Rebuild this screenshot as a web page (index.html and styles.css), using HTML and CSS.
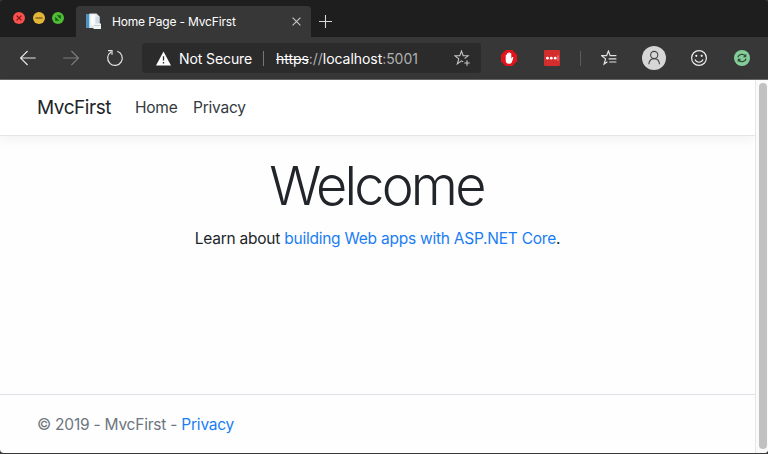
FILE: index.html
```html
<!DOCTYPE html>
<html lang="en">
<head>
<meta charset="utf-8">
<title>Home Page - MvcFirst</title>
<link rel="stylesheet" href="styles.css">
</head>
<body>
<div class="window">
  <div class="tabstrip">
    <div class="lights">
      <svg width="12" height="12" viewBox="0 0 12 12"><circle cx="6" cy="6" r="6" fill="#f9514d"/><path d="M3.6 3.6l4.8 4.8M8.4 3.6L3.6 8.4" stroke="#85151a" stroke-width="1.3"/></svg>
      <svg width="12" height="12" viewBox="0 0 12 12"><circle cx="6" cy="6" r="6" fill="#e2b738"/><path d="M2.5 6h7" stroke="#8c6417" stroke-width="1.3"/></svg>
      <svg width="12" height="12" viewBox="0 0 12 12"><circle cx="6" cy="6" r="6" fill="#50bc36"/><path d="M4.7 3.2h4.1v4.1zM3.2 4.7v4.1h4.1z" fill="#105d12"/></svg>
    </div>
    <div class="tab">
      <svg class="favicon" width="17" height="17" viewBox="0 0 17 17"><path d="M1 1h9v14H1z" fill="#eef3f5"/><path d="M1 1h3.5v14H1z" fill="#4d91c0"/><path d="M4.5 .5h7l3 3V15h-10z" fill="#dce6ec"/><path d="M5.5 1.5h5v11h-5z" fill="#f8fafb"/><path d="M10.5 4h4v7h-4z" fill="#d2dce4"/><path d="M8.5 10.5h7.5v5.5H8.5z" fill="#f1f3f5"/><path d="M9 12.5h6.5" stroke="#c3cdd5"/></svg>
      <span class="tab-title">Home Page - MvcFirst</span>
      <svg class="tab-close" width="9" height="9" viewBox="0 0 9 9"><path d="M.6 .6l7.8 7.8M8.4 .6L.6 8.4" stroke="#c9c9c9" stroke-width="1.1"/></svg>
    </div>
    <svg class="new-tab" width="13" height="13" viewBox="0 0 13 13"><path d="M6.5 0v13M0 6.5h13" stroke="#d8d8d8" stroke-width="1.1"/></svg>
  </div>
  <div class="toolbar">
    <div class="nav-buttons">
      <svg width="16" height="16" viewBox="0 0 16 16" fill="none" stroke="#e6e6e6" stroke-width="1.1"><path d="M15.7 8H.8M7.6 1L.6 8l7 7"/></svg>
      <svg width="16" height="16" viewBox="0 0 16 16" fill="none" stroke="#7d7d7d" stroke-width="1.1"><path d="M.3 8h14.9M8.4 1l7 7-7 7"/></svg>
      <svg width="18" height="18" viewBox="0 0 18 18" fill="none" stroke="#e4e4e4" stroke-width="1.2"><path d="M11.3 2.2A7.3 7.3 0 1 1 5 3M2 1.6h4v4.1"/></svg>
    </div>
    <div class="address">
      <svg class="warning" width="15" height="15" viewBox="0 0 15 15"><path d="M7.5 .5L15 14.5H0z" fill="#fff"/><path d="M7.5 5.3v4.2M7.5 10.9v1.5" stroke="#2b2b2b" stroke-width="1.3"/></svg>
      <span class="not-secure">Not Secure</span>
      <span class="address-rule"></span>
      <span class="url"><s>https</s><i>://</i>localhost<i>:5001</i></span>
      <svg class="star" width="17" height="17" viewBox="0 0 17 17" fill="none" stroke="#c6c6c6" stroke-width="1.1"><path d="M9.2 11.9L7.5 10.9 3.3 13.9l1.5-5L.9 5.8l4.9-.1L7.5 1l1.7 4.7 4.9.1-3.5 2.9M13 10.3v5.4M10.3 13h5.4"/></svg>
    </div>
    <svg class="blocker" width="16" height="16" viewBox="0 0 16 16"><path d="M4.7 0h6.6L16 4.7v6.6L11.3 16H4.7L0 11.3V4.7z" fill="#e2131b"/><path d="M4.7 5.2c0-1 1.3-1 1.3 0V3.7c0-1 1.4-1 1.4 0V3c0-1 1.5-1 1.5 0v.8c0-1 1.4-1 1.4 0V9l.6-1.5c.5-.9 1.6-.5 1.4.4l-1.2 3.5c-.6 1.8-1.5 2.4-3 2.4-2.4 0-3.4-1.3-3.4-3.6z" fill="#fff"/></svg>
    <svg class="password" width="16" height="16" viewBox="0 0 16 16"><rect width="16" height="16" rx="1.3" fill="#d32d2e"/><g fill="#fff"><circle cx="3.4" cy="8.2" r="1.4"/><circle cx="7.3" cy="8.2" r="1.4"/><circle cx="11.2" cy="8.2" r="1.4"/></g><path d="M14 5.4v5.4" stroke="#ef9ca0" stroke-width=".9"/></svg>
    <span class="toolbar-rule"></span>
    <svg class="favorites" width="16" height="16" viewBox="0 0 16 16" fill="none" stroke="#e2e2e2" stroke-width="1.2"><path d="M15.4 5.7H9.2L7.4 1 5.6 5.6l-5 .1 4 3.2-1.5 5.2 3.3-2.3M7.6 8.8h7.8M8.3 12h7.1"/></svg>
    <svg class="avatar" width="24" height="24" viewBox="0 0 24 24"><circle cx="12" cy="12" r="12" fill="#d6d6d6"/><g fill="none" stroke="#444" stroke-width="1.1"><circle cx="12.2" cy="9" r="3.6"/><path d="M6.8 18.2c.4-3.5 2.4-5.6 5.4-5.6s5 2.1 5.3 5.6"/></g></svg>
    <svg class="smile" width="16" height="16" viewBox="0 0 16 16"><circle cx="8" cy="8" r="7.4" fill="none" stroke="#eee" stroke-width="1.2"/><circle cx="5.3" cy="5.8" r="1.1" fill="#eee"/><circle cx="10.7" cy="5.8" r="1.1" fill="#eee"/><path d="M3.9 9.6c1.7 3.5 6.5 3.5 8.2 0" fill="none" stroke="#eee" stroke-width="1.1"/></svg>
    <svg class="update" width="16" height="16" viewBox="0 0 16 16"><circle cx="8" cy="8" r="8" fill="#83cd99"/><path d="M3.9 7.2C4.8 4 9.4 3.5 11.4 6M12.1 8.8c-.9 3.2-5.5 3.7-7.5 1.2" fill="none" stroke="#344d3c" stroke-width="1.3"/><path d="M12.3 3.8v3.5H8.8zM3.7 12.2V8.7h3.5z" fill="#344d3c"/></svg>
  </div>
  <div class="viewport">
    <div class="page">
      <header class="navbar">
        <span class="brand">MvcFirst</span>
        <span class="nav-home">Home</span>
        <span class="nav-privacy">Privacy</span>
      </header>
      <main class="content">
        <h1>Welcome</h1>
        <p>Learn about <a>building Web apps with ASP.NET Core</a>.</p>
      </main>
      <footer class="footer"><span>© 2019 - MvcFirst - <a>Privacy</a></span></footer>
    </div>
    <div class="scrollbar"><div class="thumb"></div></div>
  </div>
</div>
</body>
</html>
```
FILE: styles.css
```css
* { box-sizing: border-box; }
body { margin: 0; background: #3a3a3a; font-family: Inter, "Liberation Sans", sans-serif; overflow: hidden; }
svg { display: block; flex: none; }
span { white-space: nowrap; }
.window { width: 768px; height: 453px; display: flex; flex-direction: column; border-radius: 4px; overflow: hidden; background: #373737; }
.tabstrip { height: 37px; flex: none; background: #1e1e1e; display: flex; }
.lights { width: 76px; padding: 12px 0 0 13px; display: flex; gap: 7.5px; flex: none; }
.tab { width: 235px; height: 31px; margin-top: 6px; background: #373737; border-radius: 4px 4px 0 0; display: flex; align-items: center; padding: 0 10px 0 9px; color: #fff; }
.favicon { margin-right: 10px; }
.tab-title { font-size: 12px; letter-spacing: -0.17px; }
.tab-close { margin-left: auto; }
.new-tab { margin: 15px 0 0 8px; }
.toolbar { height: 43px; flex: none; background: #373737; border-bottom: 1px solid #666; display: flex; align-items: center; }
.nav-buttons { width: 142px; padding-left: 20px; display: flex; align-items: center; gap: 27px; flex: none; }
.address { width: 339px; height: 30px; background: #2b2b2b; border-radius: 4px; display: flex; align-items: center; padding: 0 10px 0 14px; color: #fff; font-size: 14px; flex: none; }
.not-secure { width: 84px; margin-left: 8px; letter-spacing: -0.1px; }
.address-rule { width: 1px; height: 15px; background: #777; }
.url { margin-left: 12px; letter-spacing: -0.05px; }
.url i { font-style: normal; color: #b0b0b0; }
.star { margin-left: auto; }
.blocker { margin-left: 20px; }
.password { margin-left: 27px; }
.toolbar-rule { width: 1px; height: 15px; background: #5d5d5d; margin-left: 20px; }
.favorites { margin-left: 20px; }
.avatar { margin-left: 25px; }
.smile { margin-left: 25px; }
.update { margin-left: 27px; }
.viewport { display: flex; flex: 1; background: #fefefe; }
.page { flex: 1; display: flex; flex-direction: column; color: #212529; }
.navbar { height: 56px; display: flex; align-items: center; padding-left: 37px; background: #fff; border-bottom: 1px solid #e3e5e7; box-shadow: 0 4px 12px rgba(0,0,0,.05); font-size: 15.5px; letter-spacing: -0.22px; color: #343a40; }
.brand { font-size: 19px; letter-spacing: -0.45px; width: 98px; color: #212529; }
.nav-home { width: 58px; }
.content { flex: 1; text-align: center; }
h1 { margin: 16px 0 0; font-size: 54px; line-height: 68px; font-weight: 300; letter-spacing: -2.8px; text-indent: -2px; }
p { margin: 7px 0 0; font-size: 15.5px; line-height: 24px; letter-spacing: -0.24px; }
a { color: #1a7df5; }
.footer { height: 59px; border-top: 1px solid #dee2e6; padding-left: 37px; display: flex; align-items: center; font-size: 15.5px; letter-spacing: -0.22px; color: #6c757d; }
.scrollbar { width: 13px; background: #fafafa; border-left: 1px solid #e7e7e7; padding: 3px 1px 4px 3px; }
.thumb { width: 8px; height: 100%; border-radius: 4px; background: #c1c1c1; }
```
